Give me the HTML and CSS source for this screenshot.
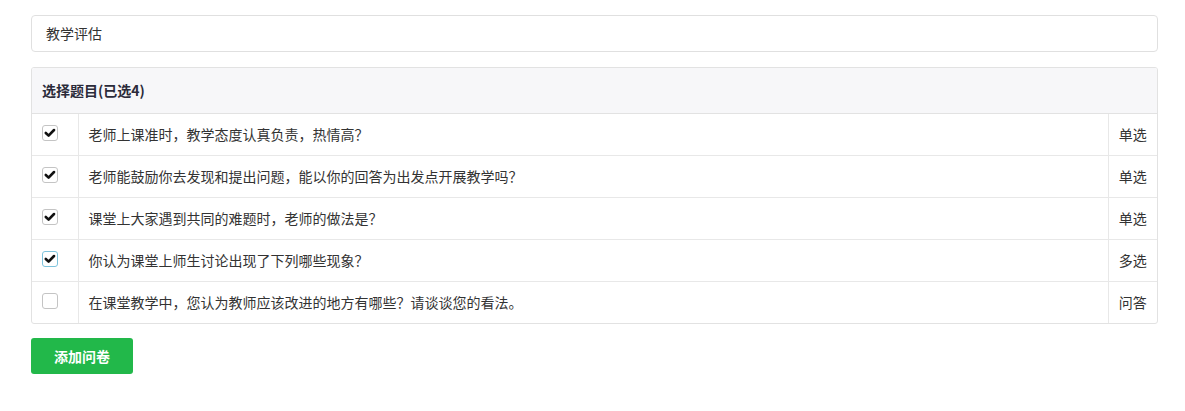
FILE: index.html
```html
<!DOCTYPE html>
<html lang="zh-CN">
<head>
  <meta charset="UTF-8">
  <link rel="stylesheet" href="styles.css">
</head>
<body>

<div class="title-box">教学评估</div>

<div class="panel">
  <div class="panel-head">选择题目(已选4)</div>
  <table class="qtable">
    <tr>
      <td class="col-check"><span class="cb checked"><svg viewBox="0 0 16 16"><path d="M3.2 8 L6.4 11 L12.6 4.6" /></svg></span></td>
      <td class="col-title">老师上课准时，教学态度认真负责，热情高？</td>
      <td class="col-type">单选</td>
    </tr>
    <tr>
      <td class="col-check"><span class="cb checked"><svg viewBox="0 0 16 16"><path d="M3.2 8 L6.4 11 L12.6 4.6" /></svg></span></td>
      <td class="col-title">老师能鼓励你去发现和提出问题，能以你的回答为出发点开展教学吗？</td>
      <td class="col-type">单选</td>
    </tr>
    <tr>
      <td class="col-check"><span class="cb checked"><svg viewBox="0 0 16 16"><path d="M3.2 8 L6.4 11 L12.6 4.6" /></svg></span></td>
      <td class="col-title">课堂上大家遇到共同的难题时，老师的做法是？</td>
      <td class="col-type">单选</td>
    </tr>
    <tr>
      <td class="col-check"><span class="cb checked focus"><svg viewBox="0 0 16 16"><path d="M3.2 8 L6.4 11 L12.6 4.6" /></svg></span></td>
      <td class="col-title">你认为课堂上师生讨论出现了下列哪些现象？</td>
      <td class="col-type">多选</td>
    </tr>
    <tr>
      <td class="col-check"><span class="cb"></span></td>
      <td class="col-title">在课堂教学中，您认为教师应该改进的地方有哪些？请谈谈您的看法。</td>
      <td class="col-type">问答</td>
    </tr>
  </table>
</div>

<button class="add-btn">添加问卷</button>

</body>
</html>
```

FILE: styles.css
```css
body {
  margin: 0;
  padding: 15px 27px 0 31px;
  font-family: "Noto Sans CJK SC", "Liberation Sans", sans-serif;
  font-size: 14px;
  color: #333;
  background: #fff;
}

.title-box {
  height: 37px;
  box-sizing: border-box;
  border: 1px solid #e0e0e0;
  border-radius: 4px;
  padding: 0 14px;
  line-height: 35px;
  color: #333;
}

.panel {
  margin-top: 15px;
  border: 1px solid #e2e2e2;
  border-radius: 3px;
  overflow: hidden;
}

.panel-head {
  background: #f7f7f9;
  height: 46px;
  line-height: 45px;
  padding: 0 10px;
  font-weight: bold;
  color: #2b2b3a;
  border-bottom: 1px solid #e2e2e2;
  box-sizing: border-box;
}

.qtable {
  width: 100%;
  border-collapse: collapse;
}

.qtable td {
  height: 42px;
  padding: 0 10px;
  border-top: 1px solid #e8e8e8;
  box-sizing: border-box;
  vertical-align: middle;
}

.qtable tr:first-child td {
  border-top: none;
  height: 41px;
}

.col-check {
  width: 46px;
  box-sizing: border-box;
  border-right: 1px solid #e8e8e8;
}

.col-type {
  width: 49px;
  text-align: center;
  border-left: 1px solid #e8e8e8;
  white-space: nowrap;
}

.cb {
  display: block;
  width: 16px;
  height: 16px;
  box-sizing: border-box;
  border: 1px solid #c4c4c4;
  border-radius: 3px;
  background: #fff;
  margin-top: -3px;
}

.cb svg {
  display: block;
  width: 14px;
  height: 14px;
}

.cb svg path {
  fill: none;
  stroke: #111;
  stroke-width: 3;
  stroke-linecap: round;
  stroke-linejoin: round;
}

.cb.focus {
  border-color: #7ec3dc;
}

.add-btn {
  margin-top: 14px;
  width: 102px;
  height: 36px;
  border: none;
  border-radius: 3px;
  background: #22b84a;
  color: #fff;
  font-family: "Noto Sans CJK SC", "Liberation Sans", sans-serif;
  font-size: 14px;
  font-weight: bold;
  cursor: pointer;
}
```
